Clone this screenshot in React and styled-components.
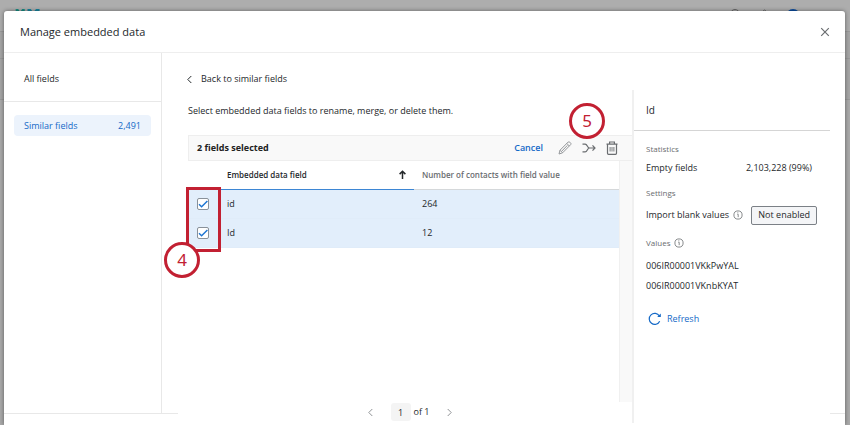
import { useState } from 'react';
import styled, { createGlobalStyle } from 'styled-components';

const GlobalStyle = createGlobalStyle`
  * {
    box-sizing: border-box;
  }

  body {
    margin: 0;
    background: #a9a9a9;
    color: #24282b;
    font-family: 'Open Sans', 'Noto Sans', sans-serif;
    font-size: 9px;
    line-height: 14px;
  }

  button,
  input {
    font: inherit;
    color: inherit;
  }
`;

const Page = styled.div`
  position: relative;
  height: 100vh;
  overflow: hidden;
  display: flex;
  flex-direction: column;
  padding: 11px 5px 0 4px;
`;

const Backdrop = styled.div`
  position: absolute;
  inset: 0;
  display: flex;
  flex-direction: column;
`;

const BackdropRow = styled.div`
  height: ${({ $height }) => $height}px;
  border-bottom: 1px solid #999;
  background: #a5a5a5;
`;

const TopBar = styled(BackdropRow)`
  display: flex;
  justify-content: space-between;
  padding: 9px 36px 0 15px;
  background: #adadad;
`;

const Modal = styled.div`
  position: relative;
  flex: 1;
  display: flex;
  flex-direction: column;
  background: #fff;
  border-radius: 3px 3px 0 0;
  box-shadow: 0 0 4px rgba(0, 0, 0, 0.45);
`;

const Header = styled.header`
  display: flex;
  align-items: center;
  justify-content: space-between;
  height: 42px;
  padding: 0 15px 0 16px;
  border-bottom: 1px solid #eee;
`;

const Title = styled.h1`
  margin: 0;
  font-size: 11px;
  font-weight: 400;
  line-height: 18px;
`;

const IconButton = styled.button`
  display: flex;
  padding: 0;
  border: none;
  background: none;
  color: ${({ $color }) => $color || '#6a6d70'};
  cursor: pointer;
`;

const Body = styled.div`
  flex: 1;
  display: flex;
  min-height: 0;
`;

const Sidebar = styled.nav`
  flex: none;
  width: 158px;
  border-right: 1px solid #e8e8e8;
`;

const SidebarSection = styled.div`
  padding: ${({ $first }) => ($first ? '15px 10px 12px' : '13px 10px')};
  border-bottom: ${({ $first }) => ($first ? '1px solid #e8e8e8' : 'none')};
`;

const SidebarLink = styled.a`
  display: flex;
  justify-content: space-between;
  padding: 4px 10px 3px;
  border-radius: 4px;
  color: ${({ $active }) => ($active ? '#1469c7' : 'inherit')};
  background: ${({ $active }) => ($active ? '#ecf3fc' : 'none')};
  font-weight: 500;
  text-decoration: none;
`;

const Main = styled.main`
  position: relative;
  flex: 1;
  display: flex;
  flex-direction: column;
  margin: 0 0 -12px 16px;
  padding: 19px 0 0 10px;
  background: #fff;
`;

const BackLink = styled.a`
  display: flex;
  align-items: center;
  gap: 9px;
  margin-left: -1px;
  color: inherit;
  font-weight: 500;
  text-decoration: none;
`;

const Description = styled.p`
  margin: 18px 0 17px;
`;

const Toolbar = styled.div`
  position: relative;
  display: flex;
  align-items: center;
  gap: 10px;
  height: 26px;
  padding: 0 14px 0 8px;
  border: 1px solid #eee;
  border-right: none;
  background: #f9f9f9;
`;

const SelectedCount = styled.strong`
  flex: 1;
  font-weight: 700;
  color: #222;
`;

const TextButton = styled.button`
  display: flex;
  align-items: center;
  gap: 5px;
  padding: 0 2px;
  border: none;
  background: none;
  color: #1469c7;
  font-weight: ${({ $strong }) => ($strong ? 600 : 500)};
  cursor: pointer;
`;

const ToolbarActions = styled.div`
  display: flex;
  align-items: center;
  gap: 10px;
  margin-left: 3px;
`;

const TableArea = styled.div`
  position: relative;
  flex: 1;
  display: flex;
  align-items: flex-start;
`;

const ScrollTrack = styled.div`
  align-self: stretch;
  width: 13px;
  border-left: 1px solid #f0f0f0;
  background: #f9f9f9;
`;

const FieldsTable = styled.table`
  flex: 1;
  border-collapse: collapse;
  table-layout: fixed;
`;

const HeadCell = styled.th`
  width: ${({ $width }) => $width || 'auto'};
  height: 28px;
  padding: 0 8px;
  border-bottom: 1px solid ${({ $sorted }) => ($sorted ? '#3d86d4' : '#d5d8da')};
  color: ${({ $sorted }) => ($sorted ? '#24282b' : '#6a6d70')};
  font-size: 8px;
  font-weight: 600;
  text-align: left;
`;

const SortLabel = styled.span`
  display: flex;
  align-items: center;
  justify-content: space-between;
`;

const Cell = styled.td`
  height: 29px;
  padding: 0 8px;
  border-bottom: 1px solid #e0ecf9;
  background: #e2eefb;
  font-weight: 500;
`;

const Checkbox = styled.input`
  appearance: none;
  width: 12px;
  height: 12px;
  margin: 0;
  border: 1px solid #89919a;
  border-radius: 2px;
  background: #fff;
`;

const CheckLabel = styled.label`
  display: grid;
  width: 12px;
  margin: 1px 0 0 1px;

  & > * {
    grid-area: 1 / 1;
  }

  & svg {
    z-index: 1;
    pointer-events: none;
  }
`;

const Pagination = styled.div`
  display: flex;
  align-items: center;
  justify-content: center;
  gap: 18px;
  padding: 1px 0 4px;
`;

const PageStatus = styled.label`
  display: flex;
  align-items: center;
  gap: 3px;
  font-weight: 500;
`;

const PageInput = styled.input`
  width: 20px;
  height: 18px;
  padding: 0;
  border: none;
  border-radius: 3px;
  background: #f4f4f4;
  text-align: center;
`;

const Details = styled.aside`
  position: relative;
  flex: none;
  width: 198px;
  margin: 37px 15px -10px 0;
  border-left: 2px solid #f0f0f0;
  background: #fff;
`;

const DetailsTitle = styled.h2`
  margin: 0;
  padding: 13px 12px;
  border-bottom: 1px solid #d5d5d5;
  font-size: 10px;
  font-weight: 500;
  line-height: 14px;
`;

const DetailsBody = styled.div`
  display: flex;
  flex-direction: column;
  align-items: stretch;
  gap: 6px;
  padding: 11px 13px 0 12px;
`;

const SectionLabel = styled.h3`
  display: flex;
  align-items: center;
  gap: 4px;
  margin: 0;
  color: #6a6d70;
  font-size: 8px;
  font-weight: 400;
  line-height: 14px;
`;

const DetailRow = styled.div`
  display: flex;
  align-items: center;
  justify-content: space-between;
  height: ${({ $height }) => $height}px;
  padding-right: ${({ $inset }) => $inset || 0}px;
  font-weight: 500;
`;

const Inline = styled.span`
  display: flex;
  align-items: center;
  gap: 4px;
`;

const StatusButton = styled.button`
  height: 19px;
  padding: 0 6px;
  border: 1px solid #7b8086;
  border-radius: 2px;
  background: #f4f5f7;
  line-height: 14px;
`;

const ValueList = styled.ul`
  margin: 6px 0 10px;
  padding: 0;
  list-style: none;
  font-weight: 500;
  line-height: 20px;
`;

const Footer = styled.footer`
  flex: none;
  height: 12px;
  border-top: 1px solid #e8e8e8;
`;

const CalloutBox = styled.div`
  position: absolute;
  top: 26px;
  left: -2px;
  width: 35px;
  height: 65px;
  border: 3px solid #c22032;
  pointer-events: none;
`;

const Callout = styled.div`
  position: absolute;
  top: ${({ $top }) => $top}px;
  left: ${({ $left }) => $left};
  right: ${({ $right }) => $right};
  display: flex;
  align-items: center;
  justify-content: center;
  width: 36px;
  height: 36px;
  border: 3px solid #c22032;
  border-radius: 50%;
  background: #fff;
  color: #c22032;
  font-family: 'Noto Sans', sans-serif;
  font-size: 17px;
  line-height: 20px;
`;

const Chevron = ({ right }) => (
  <svg width="5" height="9" viewBox="0 0 5 9" fill="none" stroke="currentColor">
    <path d={right ? 'M.7 1 4.2 4.5.7 8' : 'M4.3 1 .8 4.5 4.3 8'} />
  </svg>
);

const InfoIcon = () => (
  <svg width="10" height="10" viewBox="0 0 10 10" fill="none" stroke="#6a6d70" strokeWidth=".8">
    <circle cx="5" cy="5" r="4.1" />
    <path d="M4.3 4.3h.9v2.9M4.8 2.4v.9" />
  </svg>
);

const PencilIcon = () => (
  <svg width="14" height="14" viewBox="0 0 14 14" fill="none" stroke="currentColor" strokeLinejoin="round">
    <path d="M1 13l1-3.8L10.2 1q.8-.6 1.6.2l.9.9q.7.8 0 1.5L4.6 11.8zM8.8 2.4l2.6 2.7M2 9.2l2.6 2.6M3.8 10.1l5.6-5.7" />
  </svg>
);

const MergeIcon = () => (
  <svg width="14" height="12" viewBox="0 0 14 12" fill="none" stroke="currentColor" strokeWidth="1.2">
    <path d="M.5 2.2h2.6C5.6 2.2 5 6 7.5 6H13M.5 9.8h2.6C5.6 9.8 5 6 7.5 6M10.5 3.4 13 6l-2.5 2.6" />
  </svg>
);

const TrashIcon = () => (
  <svg width="12" height="14" viewBox="0 0 12 14" fill="none" stroke="currentColor" strokeWidth="1.2">
    <path d="M.5 3.1h11M3.6 3V1h4.8v2M1.5 3.2v9.1q0 1 1 1h7q1 0 1-1V3.2" />
    <path d="M4.1 6v4.5M6 6v4.5M7.9 6v4.5" strokeWidth=".9" />
  </svg>
);

const RefreshIcon = () => (
  <svg width="14" height="14" viewBox="0 0 14 14" fill="none" stroke="currentColor" strokeWidth="1.2">
    <path d="M11.7 9.3A5.5 5.5 0 1 1 11.4 4" />
    <path d="M12.8 1.5v3.6H9.2z" fill="currentColor" stroke="none" />
  </svg>
);

const fields = [
  { name: 'id', contacts: '264' },
  { name: 'Id', contacts: '12' },
];

const App = () => {
  const [selected, setSelected] = useState(['id', 'Id']);

  const toggle = name =>
    setSelected(prev => (prev.includes(name) ? prev.filter(item => item !== name) : [...prev, name]));

  return (
    <Page>
      <GlobalStyle />
      <Backdrop>
        <TopBar $height={32}>
          <svg width="26" height="10" viewBox="0 0 26 10" fill="none" strokeWidth="3">
            <path d="M1.5 0 7 9M9 0 3 9" stroke="#168d83" />
            <path d="M14 9V0l4 6 5-6v9" stroke="#1886a0" />
          </svg>
          <svg width="84" height="16" viewBox="0 0 84 16" fill="none" stroke="#666">
            <circle cx="5" cy="5" r="4.5" />
            <path d="M31 7q0-5 3.5-6Q38 2 38 7" />
            <circle cx="63" cy="7" r="7" fill="#0b4da0" stroke="none" />
          </svg>
        </TopBar>
        <BackdropRow $height={27} />
        <BackdropRow $height={41} />
      </Backdrop>
      <Modal role="dialog" aria-labelledby="dialog-title">
        <Header>
          <Title id="dialog-title">Manage embedded data</Title>
          <IconButton aria-label="Close">
            <svg width="10" height="10" viewBox="0 0 10 10" stroke="currentColor" strokeWidth="1.2">
              <path d="M1.2 1.2l7.6 7.6M8.8 1.2 1.2 8.8" />
            </svg>
          </IconButton>
        </Header>
        <Body>
          <Sidebar>
            <SidebarSection $first>
              <SidebarLink href="#all">All fields</SidebarLink>
            </SidebarSection>
            <SidebarSection>
              <SidebarLink href="#similar" $active>
                <span>Similar fields</span>
                <span>2,491</span>
              </SidebarLink>
            </SidebarSection>
          </Sidebar>
          <Main>
            <BackLink href="#similar">
              <Chevron />
              Back to similar fields
            </BackLink>
            <Description>Select embedded data fields to rename, merge, or delete them.</Description>
            <Toolbar>
              <SelectedCount>{selected.length} fields selected</SelectedCount>
              <TextButton $strong>Cancel</TextButton>
              <ToolbarActions>
                <IconButton aria-label="Rename" $color="#95989b">
                  <PencilIcon />
                </IconButton>
                <IconButton aria-label="Merge">
                  <MergeIcon />
                </IconButton>
                <IconButton aria-label="Delete">
                  <TrashIcon />
                </IconButton>
              </ToolbarActions>
              <Callout $top={-33} $right="27px">5</Callout>
            </Toolbar>
            <TableArea>
              <FieldsTable>
                <thead>
                  <tr>
                    <HeadCell $sorted $width="31px" aria-label="Selected" />
                    <HeadCell $sorted $width="195px" aria-sort="ascending">
                      <SortLabel>
                        Embedded data field
                        <svg width="7" height="9" viewBox="0 0 7 9" fill="none" stroke="#24282b" strokeWidth="1.5">
                          <path d="M3.5 9V1.3M.6 4.1l2.9-2.9 2.9 2.9" />
                        </svg>
                      </SortLabel>
                    </HeadCell>
                    <HeadCell>Number of contacts with field value</HeadCell>
                  </tr>
                </thead>
                <tbody>
                  {fields.map(({ name, contacts }) => (
                    <tr key={name}>
                      <Cell>
                        <CheckLabel>
                          <Checkbox
                            type="checkbox"
                            aria-label={name}
                            checked={selected.includes(name)}
                            onChange={() => toggle(name)}
                          />
                          {selected.includes(name) && (
                            <svg width="12" height="12" viewBox="0 0 12 12" fill="none" stroke="#1f76d3" strokeWidth="1.5">
                              <path d="M2 6.2l2.6 2.5L10.4 3" />
                            </svg>
                          )}
                        </CheckLabel>
                      </Cell>
                      <Cell>{name}</Cell>
                      <Cell>{contacts}</Cell>
                    </tr>
                  ))}
                </tbody>
              </FieldsTable>
              <ScrollTrack />
              <CalloutBox />
              <Callout $top={81} $left="-24px">4</Callout>
            </TableArea>
            <Pagination>
              <IconButton aria-label="Previous page" $color="#909396">
                <Chevron />
              </IconButton>
              <PageStatus>
                <PageInput defaultValue="1" aria-label="Page" />
                of 1
              </PageStatus>
              <IconButton aria-label="Next page" $color="#909396">
                <Chevron right />
              </IconButton>
            </Pagination>
          </Main>
          <Details>
            <DetailsTitle>Id</DetailsTitle>
            <DetailsBody>
              <div>
                <SectionLabel>Statistics</SectionLabel>
                <DetailRow $height={24} $inset={5}>
                  <span>Empty fields</span>
                  <span>2,103,228 (99%)</span>
                </DetailRow>
              </div>
              <div>
                <SectionLabel>Settings</SectionLabel>
                <DetailRow $height={30}>
                  <Inline>
                    Import blank values
                    <InfoIcon />
                  </Inline>
                  <StatusButton>Not enabled</StatusButton>
                </DetailRow>
              </div>
              <div>
                <SectionLabel>
                  Values
                  <InfoIcon />
                </SectionLabel>
                <ValueList>
                  <li>006IR00001VKkPwYAL</li>
                  <li>006IR00001VKnbKYAT</li>
                </ValueList>
              </div>
              <TextButton>
                <RefreshIcon />
                Refresh
              </TextButton>
            </DetailsBody>
          </Details>
        </Body>
        <Footer />
      </Modal>
    </Page>
  );
};

export default App;
